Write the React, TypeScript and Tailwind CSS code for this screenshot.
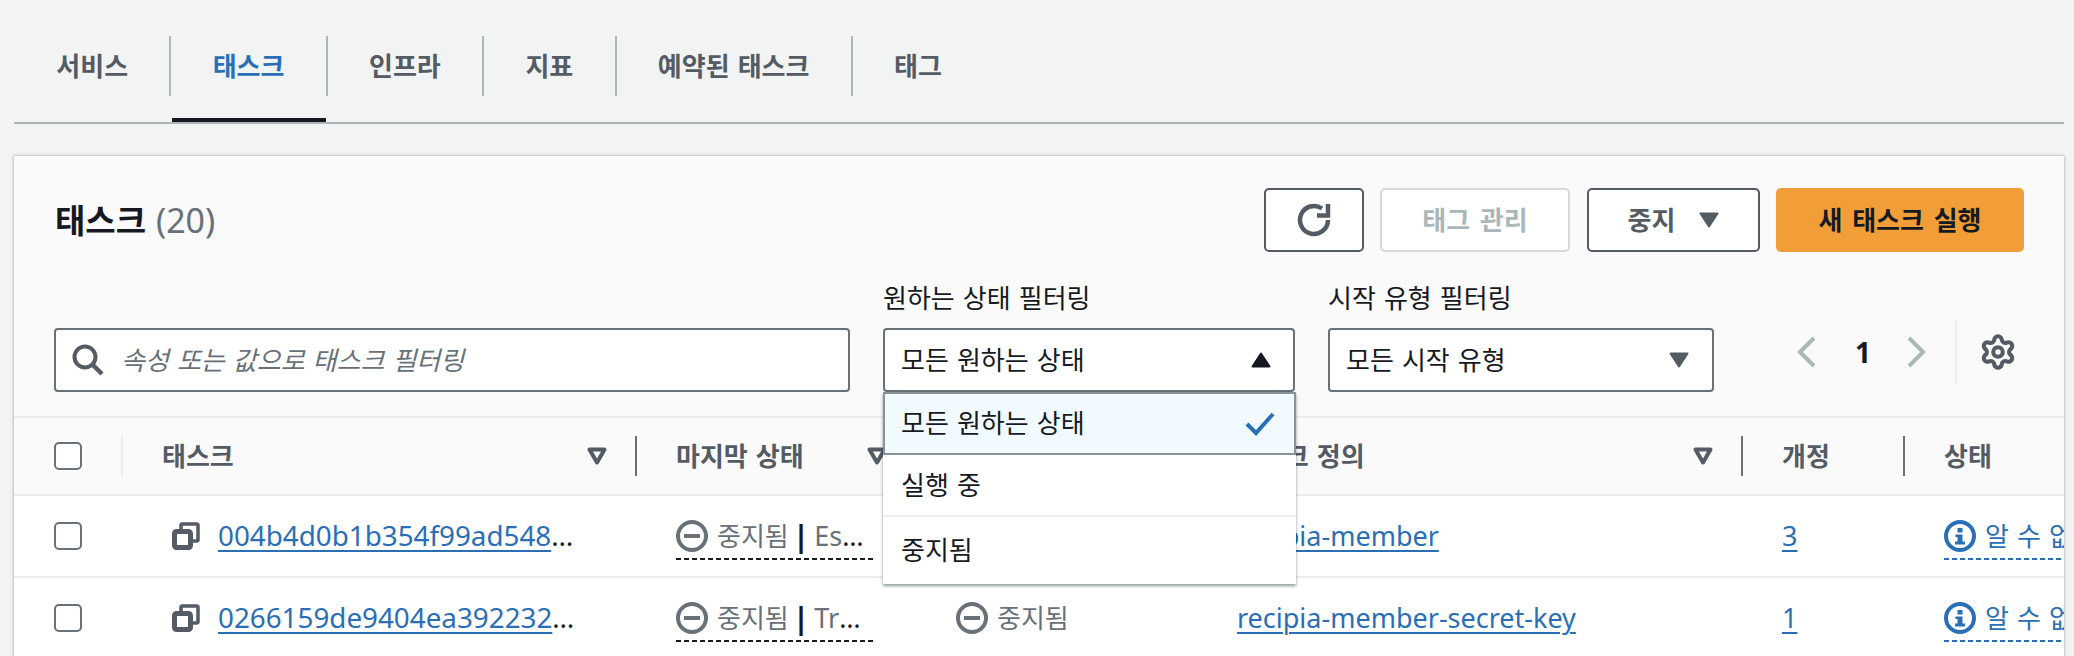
import React from "react";
import { Settings } from "lucide-react";

const gridCols = "grid grid-cols-[107px_514px_280px_281px_545px_162px_1fr]";
const rowBorder = "border-b-2 border-[#eaeded]";

function Caret({ up = false, color = "#545b64" }: { up?: boolean; color?: string }) {
  return (
    <svg width="20" height="16" viewBox="0 0 20 16" className="shrink-0">
      <path d={up ? "M10 1.5 L18.5 14.5 H1.5 Z" : "M1.5 1.5 H18.5 L10 14.5 Z"} fill={color} stroke={color} strokeWidth="2" strokeLinejoin="round" />
    </svg>
  );
}

function SortIcon() {
  return (
    <svg width="20" height="18" viewBox="0 0 20 18" className="shrink-0">
      <path d="M2.5 2.5 H17.5 L10 15.5 Z" fill="none" stroke="#545b64" strokeWidth="4" strokeLinejoin="round" />
    </svg>
  );
}

function CopyIcon() {
  return (
    <svg width="28" height="28" viewBox="0 0 28 28" className="shrink-0">
      <rect x="2.5" y="9.5" width="16" height="16" rx="2" fill="none" stroke="#545b64" strokeWidth="5" />
      <path d="M9 7 V3.5 Q9 2 10.5 2 H24.5 Q26 2 26 3.5 V17.5 Q26 19 24.5 19 H21" fill="none" stroke="#545b64" strokeWidth="3.5" />
    </svg>
  );
}

function StoppedIcon() {
  return (
    <svg width="32" height="32" viewBox="0 0 32 32" className="shrink-0">
      <circle cx="16" cy="16" r="14" fill="none" stroke="#687078" strokeWidth="4" />
      <path d="M8 16 H24" stroke="#687078" strokeWidth="4" />
    </svg>
  );
}

function InfoIcon() {
  return (
    <svg width="32" height="32" viewBox="0 0 32 32" className="shrink-0">
      <circle cx="16" cy="16" r="14" fill="none" stroke="#2a6fb6" strokeWidth="4" />
      <rect x="13.5" y="8" width="5" height="4.5" fill="#2a6fb6" />
      <path d="M11.5 14.5 H18.5 V21.5 H21 V24.5 H11 V21.5 H13.5 V17 H11.5 Z" fill="#2a6fb6" />
    </svg>
  );
}

function Dashes({ blue = false }: { blue?: boolean }) {
  return (
    <div
      className={
        blue
          ? "mt-1.5 h-[2px] w-full bg-[repeating-linear-gradient(90deg,#2a6fb6_0_5px,transparent_5px_8px)]"
          : "mt-1.5 h-[2px] w-full bg-[repeating-linear-gradient(90deg,#16191f_0_5px,transparent_5px_8px)]"
      }
    />
  );
}

const tabs = ["서비스", "태스크", "인프라", "지표", "예약된 태스크", "태그"];

function Tabs() {
  return (
    <div className="box-content flex h-[86px] border-b-2 border-[#aab7b8] pl-[1px]">
      {tabs.map((t, i) => (
        <div key={t} className="relative flex h-[60px] items-center">
          <div
            className={
              i === 1
                ? "flex h-[60px] items-center px-[41.3px] text-[26px] font-bold text-[#2a6fb6]"
                : "flex h-[60px] items-center px-[41.3px] text-[26px] font-bold text-[#545b64]"
            }
          >
            {t}
          </div>
          {i < tabs.length - 1 && <div className="h-[60px] w-[2px] bg-[#aab7b8]" />}
          {i === 1 && <div className="absolute left-[1px] right-[2px] top-[82px] h-[4px] bg-[#16191f]" />}
        </div>
      ))}
    </div>
  );
}

function HeaderCell({ label, sort = false, light = false }: { label: string; sort?: boolean; light?: boolean }) {
  return (
    <div
      className={
        light
          ? "flex h-10 items-center justify-between overflow-hidden whitespace-nowrap border-l-2 border-[#eaeded] pl-[39px] pr-7 text-[26px] font-bold text-[#545b64]"
          : "flex h-10 items-center justify-between overflow-hidden whitespace-nowrap border-l-2 border-[#687078] pl-[39px] pr-7 text-[26px] font-bold text-[#545b64]"
      }
    >
      <span>{label}</span>
      {sort && <SortIcon />}
    </div>
  );
}

function Checkbox() {
  return <div className="ml-10 h-7 w-7 rounded-[5px] border-2 border-[#687078] bg-white" />;
}

function LastStatus({ reason }: { reason: string }) {
  return (
    <div className="ml-[41px] w-[200px] pt-6">
      <div className="flex h-8 items-center whitespace-nowrap text-[26px] text-[#687078]">
        <StoppedIcon />
        <span className="ml-[9px]">중지됨</span>
        <span className="ml-[4px] text-[30px] font-bold leading-none text-[#16191f]">|</span>
        <span className="ml-[5px] text-[27px]">{reason}</span>
        <span className="text-[27px] tracking-[1px] text-[#16191f]">…</span>
      </div>
      <Dashes />
    </div>
  );
}

function TaskRow({ id, def, rev, reason }: { id: string; def: string; rev: string; reason: string }) {
  return (
    <div className={`${gridCols} h-[82px] ${rowBorder} bg-white`}>
      <div className="flex items-center">
        <Checkbox />
      </div>
      <div className="flex items-center gap-[18px] whitespace-nowrap pl-[51px] text-[27.8px]">
        <CopyIcon />
        <div>
          <a className="text-[#2a6fb6] underline decoration-2 underline-offset-4">{id}</a>
          <span className="tracking-[1px] text-[#16191f]">…</span>
        </div>
      </div>
      <LastStatus reason={reason} />
      <div className="flex items-center gap-[9px] pl-[41px] text-[26px] text-[#687078]">
        <StoppedIcon />
        <span>중지됨</span>
      </div>
      <div className="flex items-center pl-[41px] text-[27px] text-[#2a6fb6]">
        <a className="underline decoration-2 underline-offset-4">{def}</a>
      </div>
      <div className="flex items-center pl-[41px] text-[27px] text-[#2a6fb6]">
        <a className="underline decoration-2 underline-offset-4">{rev}</a>
      </div>
      <div className="ml-[41px] overflow-hidden pt-6">
        <div className="flex h-8 items-center whitespace-nowrap text-[26px] text-[#2a6fb6]">
          <InfoIcon />
          <span className="ml-[9px]">알 수 없음</span>
        </div>
        <Dashes blue />
      </div>
    </div>
  );
}

function Dropdown() {
  return (
    <div className="absolute left-0 right-[-1px] top-[64px] z-10 bg-white text-[26px] text-[#16191f] shadow-[0_2px_3px_rgba(0,28,36,0.45)]">
      <div className="flex h-[63px] items-center justify-between border-2 border-[#879596] bg-[#f1faff] pl-4 pr-[18px]">
        <span>모든 원하는 상태</span>
        <svg width="32" height="24" viewBox="0 0 32 24">
          <path d="M3 12 L12 21 L29 2" fill="none" stroke="#2a6fb6" strokeWidth="4" />
        </svg>
      </div>
      <div className={`flex h-[62px] items-center pl-[18px] ${rowBorder}`}>실행 중</div>
      <div className="flex h-[67px] items-center pl-[18px]">중지됨</div>
    </div>
  );
}

export default function App() {
  return (
    <div className="h-[656px] w-[2074px] overflow-hidden bg-[#f2f3f3] pl-[14px] pr-[10px] pt-9 font-['Noto_Sans','Noto_Sans_CJK_KR',sans-serif] [word-spacing:1.3px]">
      <Tabs />
      <div className="mt-8 h-[600px] overflow-hidden bg-[#fafafa] shadow-[0_0_3px_rgba(0,28,36,0.4)]">
        <div className="px-10 pt-8">
          <div className="flex h-16 items-center justify-between">
            <h2 className="pl-[1px] text-[33px] font-bold text-[#16191f]">
              태스크 <span className="text-[34px] font-normal text-[#687078]">(20)</span>
            </h2>
            <div className="flex">
              <button className="flex h-16 w-[100px] items-center justify-center rounded-[5px] border-2 border-[#545b64] bg-white">
                <svg width="36" height="36" viewBox="0 0 36 36">
                  <path d="M32 18 A14 14 0 1 1 26 6.5" fill="none" stroke="#545b64" strokeWidth="4.5" />
                  <path d="M32 2 V13.5 H21" fill="none" stroke="#545b64" strokeWidth="4.5" />
                </svg>
              </button>
              <button className="ml-4 flex h-16 w-[190px] items-center justify-center rounded-[5px] border-2 border-[#d5dbdb] bg-white text-[26px] font-bold text-[#aab7b8] [word-spacing:3px]">
                태그 관리
              </button>
              <button className="ml-[17px] flex h-16 w-[173px] items-center justify-center gap-6 rounded-[5px] border-2 border-[#545b64] bg-white text-[26px] font-bold text-[#545b64]">
                중지
                <Caret />
              </button>
              <button className="ml-4 flex h-16 w-[248px] items-center justify-center rounded-[5px] bg-[#f29e38] text-[26px] font-bold text-[#16191f] [word-spacing:3px]">
                새 태스크 실행
              </button>
            </div>
          </div>

          <div className="mt-7 flex items-start">
            <div className="mt-12 flex h-16 w-[796px] items-center rounded-[4px] border-2 border-[#687078] bg-white pl-[16px]">
              <svg width="32" height="32" viewBox="0 0 32 32" className="shrink-0">
                <circle cx="13" cy="13" r="10.5" fill="none" stroke="#545b64" strokeWidth="4" />
                <path d="M20 20 L30 30" stroke="#545b64" strokeWidth="4.5" />
              </svg>
              <input
                placeholder="속성 또는 값으로 태스크 필터링"
                className="ml-[17px] w-[500px] bg-transparent text-[26px] italic outline-none [word-spacing:1.3px] placeholder:text-[#687078]"
              />
            </div>
            <div className="ml-[33px] w-[412px]">
              <div className="mb-3 h-9 whitespace-nowrap text-[26px] leading-9 text-[#16191f]">원하는 상태 필터링</div>
              <div className="relative">
                <div className="flex h-16 items-center justify-between rounded-[4px] border-2 border-[#687078] bg-white pl-4 pr-[22px] text-[26px] text-[#16191f]">
                  <span>모든 원하는 상태</span>
                  <Caret up color="#16191f" />
                </div>
                <Dropdown />
              </div>
            </div>
            <div className="ml-[33px] w-[386px]">
              <div className="mb-3 h-9 whitespace-nowrap text-[26px] leading-9 text-[#16191f]">시작 유형 필터링</div>
              <div className="flex h-16 items-center justify-between rounded-[4px] border-2 border-[#687078] bg-white pl-4 pr-[23px] text-[26px] text-[#16191f]">
                <span>모든 시작 유형</span>
                <Caret />
              </div>
            </div>
            <div className="ml-[83px] mt-10 flex h-16 items-center">
              <svg width="20" height="32" viewBox="0 0 20 32" className="shrink-0">
                <path d="M17 2 L3 16 L17 30" fill="none" stroke="#aab7b8" strokeWidth="4" />
              </svg>
              <span className="ml-[31px] w-[30px] text-center text-[28px] font-bold leading-none text-[#16191f]">1</span>
              <svg width="20" height="32" viewBox="0 0 20 32" className="ml-[28px] shrink-0">
                <path d="M3 2 L17 16 L3 30" fill="none" stroke="#aab7b8" strokeWidth="4" />
              </svg>
              <div className="ml-[29px] h-16 w-[2px] bg-[#eaeded]" />
              <Settings size={38} strokeWidth={2.6} color="#545b64" className="ml-[22px]" />
            </div>
          </div>
        </div>

        <div className="mt-6 border-t-2 border-[#eaeded]">
          <div className={`${gridCols} h-[78px] items-center ${rowBorder}`}>
            <Checkbox />
            <HeaderCell label="태스크" sort light />
            <HeaderCell label="마지막 상태" sort />
            <HeaderCell label="원하는 상태" sort />
            <HeaderCell label="태스크 정의" sort />
            <HeaderCell label="개정" />
            <HeaderCell label="상태" />
          </div>
          <TaskRow id="004b4d0b1b354f99ad548" def="recipia-member" rev="3" reason="Es" />
          <TaskRow id="0266159de9404ea392232" def="recipia-member-secret-key" rev="1" reason="Tr" />
        </div>
      </div>
    </div>
  );
}
